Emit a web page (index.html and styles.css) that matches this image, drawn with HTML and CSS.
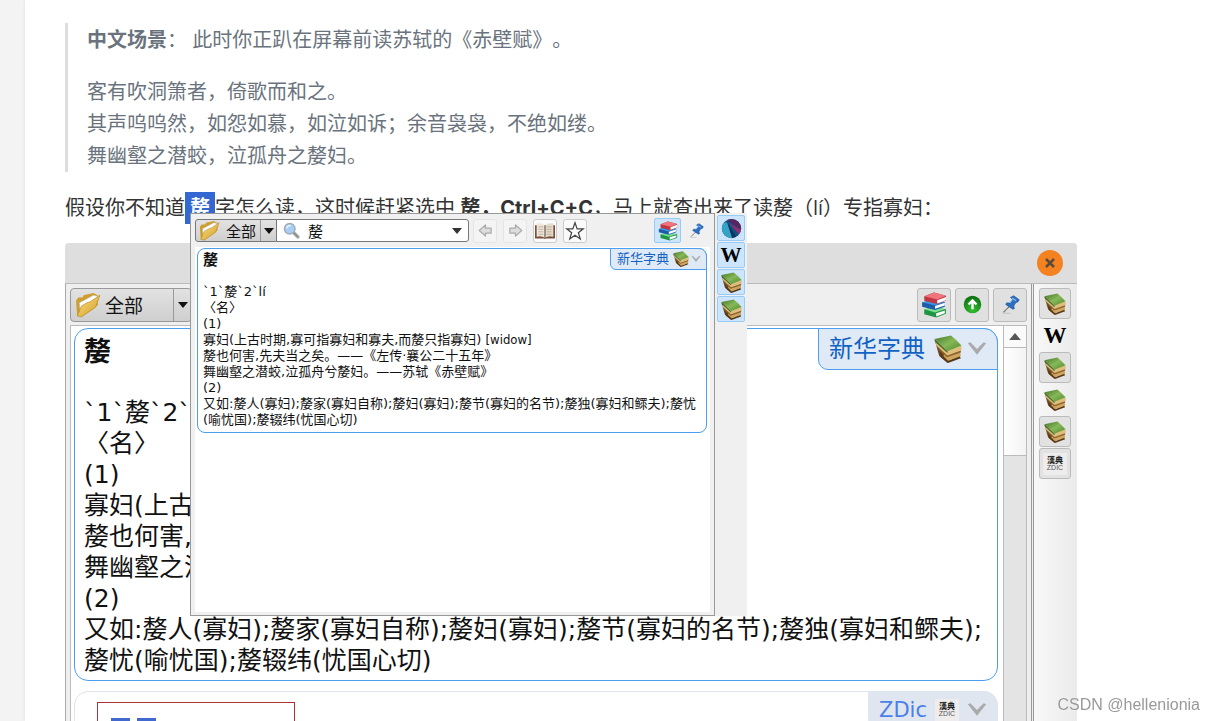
FILE: index.html
```
<!DOCTYPE html>
<html lang="zh-CN">
<head>
  <meta charset="utf-8">
  <title>嫠</title>
  <meta name="viewport" content="width=device-width, initial-scale=1.0">
  <link rel="stylesheet" href="styles.css">
</head>
<body>

  <svg class="sprite" aria-hidden="true">
    <defs>
      <linearGradient id="gold" x1="0" y1="0" x2="1" y2="1">
        <stop offset="0" stop-color="#fbe28a"/><stop offset="1" stop-color="#d39a1e"/>
      </linearGradient>
      <linearGradient id="leaf" x1="0" y1="0" x2="1" y2="1">
        <stop offset="0" stop-color="#44752a"/><stop offset=".5" stop-color="#86b857"/><stop offset="1" stop-color="#4f8a2c"/>
      </linearGradient>
      <radialGradient id="go" cx=".5" cy=".8" r=".8">
        <stop offset="0" stop-color="#35c22f"/><stop offset="1" stop-color="#0b6d10"/>
      </radialGradient>
      <clipPath id="ball"><circle cx="12" cy="12" r="11"/></clipPath>
    </defs>
    <symbol id="folder" viewBox="0 0 24 24">
      <path d="M1 8l2-3 4 0 1-2 9-2 4 2 0 9-14 10-5 0z" fill="#d09c2a"/>
      <path d="M4 10l13-7 4 1-3 10-13 6z" fill="#fff" stroke="#bbb" stroke-width=".6"/>
      <path d="M2 22L6 13 11 10 14 9 23 3 19 14 6 23z" fill="url(#gold)" stroke="#b5851d" stroke-width=".6"/>
    </symbol>
    <symbol id="search" viewBox="0 0 24 24">
      <path d="M14 14l7 7" stroke="#bbb" stroke-width="5" stroke-linecap="round"/>
      <path d="M14 14l7 7" stroke="#8d8d8d" stroke-width="2.5" stroke-linecap="round"/>
      <circle cx="9.500" cy="9.500" r="7.500" fill="#a9cdf4" stroke="#a2abb8" stroke-width="2"/>
      <path d="M5 9q1-4 6-4" stroke="#e8f4ff" stroke-width="2" fill="none"/>
    </symbol>
    <symbol id="books" viewBox="0 0 24 24">
      <path d="M3 16l9-2 11 2v4l-9 3.500-11-3z" fill="#1f9443"/>
      <path d="M14 19.500l8-2.500v2.500l-8 3z" fill="#fff"/>
      <path d="M3 16l10-2 9 2-9 3z" fill="#7be08f"/>
      <path d="M1 9.500l9-2 12 2v4l-9 3-12-3z" fill="#1b5dab"/>
      <path d="M13 13l9-3v2.500l-9 3z" fill="#fff"/>
      <path d="M1 9.500l9-2 12 2-9 3z" fill="#3f93dd"/>
      <path d="M3 4l9-3.500 11 3v4.500l-8 3-12-3z" fill="#c03742"/>
      <path d="M15 7.500l8-3v3l-8 3z" fill="#fff"/>
      <path d="M3 4l9-3.500 11 3-8 3.500z" fill="#f0747b"/>
    </symbol>
    <symbol id="tome" viewBox="0 0 24 24">
      <path d="M.5 4l4 14 7 6 3-6z" fill="#6d4c20"/>
      <path d="M4 14l8 8 10-4 1 2-11 4-6-5z" fill="#55391a"/>
      <path d="M9 16l13-4 1 6-11 4-4-4z" fill="#cfa45c"/>
      <path d="M3 8l8 9 12-4v2l-12 4-7-7z" fill="#8a6430"/>
      <path d="M.5 4l10 10 13-5v4l-12 4.500L2 9z" fill="#e0bd7a"/>
      <path d="M.5 3.500l14-3q4 3 9 8.500l-12 5z" fill="url(#leaf)"/>
      <path d="M.5 3.500l11 10.500v1.500L1 6z" fill="#44682a"/>
    </symbol>
    <symbol id="pin" viewBox="0 0 24 24">
      <path d="M3 22L11 14" stroke="#777" stroke-width="1.500"/>
      <path d="M2 23h10" stroke="#bbb"/>
      <path d="M12 3l4-2 7 5-2 3-2 0-3 5 1 3-2 1-9-6 1-2 5 0 3-4z" fill="#2a6fc2" stroke="#184f96" stroke-width=".8"/>
      <path d="M14 4l5 3M11 10l3-4" stroke="#8ec0f4" stroke-width="1.500"/>
    </symbol>
    <symbol id="arrow" viewBox="0 0 24 24">
      <path d="M2 12L12 3v5h9v8h-9v5z" fill="#ddd" stroke="#aaa" stroke-width="2" stroke-linejoin="round"/>
    </symbol>
    <symbol id="openbook" viewBox="0 0 24 24">
      <path d="M0 5h24v16H13l-1 1-1-1H0z" fill="#76513c"/>
      <path d="M2 3q6-1 10 2v15q-5-3-10-1z" fill="#efe7da"/>
      <path d="M22 3q-6-1-10 2v15q5-3 10-1z" fill="#e6dccb"/>
      <path d="M4 7h6M4 10h6M4 13h6M4 16h6M14 7h6M14 10h6M14 13h6M14 16h6" stroke="#b5a996"/>
      <path d="M12 5v15" stroke="#6f6255" stroke-width="1.500"/>
    </symbol>
    <symbol id="star" viewBox="0 0 24 24">
      <path d="M12 2l2.600 7.400H22l-6 4.700 2.300 7.400L12 17l-6.300 4.500L8 14.100 2 9.400h7.400z" fill="#fff" stroke="#444" stroke-width="1.500"/>
    </symbol>
    <symbol id="chevron" viewBox="0 0 24 24">
      <path d="M1 5l3-1 8 8 8-8 3 1-11 14z" fill="#aaa"/>
    </symbol>
    <symbol id="down" viewBox="0 0 10 6"><path d="M0 0h10L5 6z" fill="currentColor"/></symbol>
    <symbol id="up" viewBox="0 0 10 6"><path d="M0 6h10L5 0z" fill="currentColor"/></symbol>
    <symbol id="go-up" viewBox="0 0 24 24">
      <circle cx="12" cy="12" r="11" fill="url(#go)"/>
      <path d="M12 18V8M7 12l5-5 5 5" fill="none" stroke="#fff" stroke-width="3"/>
    </symbol>
    <symbol id="sphere" viewBox="0 0 24 24">
      <g clip-path="url(#ball)">
        <path d="M0 0h24v24H0z" fill="#124e84"/>
        <path d="M0 5l7 0 8 19H0z" fill="#35a3c4"/>
        <path d="M4 0h20v14z" fill="#59245f"/>
        <path d="M8 5l16 9v8z" fill="#902f6e"/>
        <path d="M7 5l12 19h-6z" fill="#0b3560"/>
      </g>
    </symbol>
  </svg>

  <main class="post">
    <blockquote>
      <p><strong>中文场景</strong>： 此时你正趴在屏幕前读苏轼的《赤壁赋》。</p>
      <p>客有吹洞箫者，倚歌而和之。<br>其声呜呜然，如怨如慕，如泣如诉；余音袅袅，不绝如缕。<br>舞幽壑之潜蛟，泣孤舟之嫠妇。</p>
    </blockquote>

    <p class="lead">假设你不知道<strong class="picked"> 嫠 </strong>字怎么读，这时候赶紧选中 <strong>嫠，<span class="keys">Ctrl+C+C</span></strong>，马上就查出来了读嫠（lí）专指寡妇：</p>

    <section class="reader">
      <header class="titlebar">
        <button class="close" aria-label="关闭"><svg viewBox="0 0 10 10"><path d="M1 1l8 8M9 1l-8 8" stroke="#5d4a3a" stroke-width="2.500"/></svg></button>
      </header>
      <div class="reader-body">
        <div class="reader-main">
          <div class="toolbar">
            <div class="group">
              <svg class="folder"><use href="#folder"/></svg>
              <select aria-label="词典组"><option>全部</option></select>
              <span class="drop"><svg><use href="#down"/></svg></span>
            </div>
            <div class="tools">
              <button aria-label="词典"><svg><use href="#books"/></svg></button>
              <button aria-label="上移"><svg class="small"><use href="#go-up"/></svg></button>
              <button aria-label="固定"><svg class="small"><use href="#pin"/></svg></button>
            </div>
          </div>
          <div class="view">
            <div class="entries">
              <article class="entry">
                <div class="tag">新华字典 <svg class="tome"><use href="#tome"/></svg><svg class="chev"><use href="#chevron"/></svg></div>
                <h2>嫠</h2>
                <p>`1`嫠`2`lí<br>〈名〉<br>(1)<br>寡妇(上古时期,寡可指寡妇和寡夫,而嫠只指寡妇) [widow]<br>嫠也何害,先夫当之矣。——《左传·襄公二十五年》<br>舞幽壑之潜蛟,泣孤舟兮嫠妇。——苏轼《赤壁赋》<br>(2)<br>又如:嫠人(寡妇);嫠家(寡妇自称);嫠妇(寡妇);嫠节(寡妇的名节);嫠独(寡妇和鳏夫);<br>嫠忧(喻忧国);嫠辍纬(忧国心切)</p>
              </article>
              <article class="entry next">
                <div class="tag">ZDic <span class="zdic"><b>漢典</b>ZDIC</span><svg class="chev"><use href="#chevron"/></svg></div>
                <div class="redbox"><i></i><i></i></div>
              </article>
            </div>
            <div class="scroll">
              <button aria-label="向上滚动"><svg><use href="#up"/></svg></button>
              <div class="thumb"></div>
            </div>
          </div>
        </div>
        <nav class="strip">
          <button class="on" aria-label="新华字典"><svg><use href="#tome"/></svg></button>
          <button class="wiki">W</button>
          <button class="on" aria-label="词典 3"><svg><use href="#tome"/></svg></button>
          <button aria-label="词典 4"><svg><use href="#tome"/></svg></button>
          <button class="on" aria-label="词典 5"><svg><use href="#tome"/></svg></button>
          <button class="on"><span class="zdic"><b>漢典</b>ZDIC</span></button>
        </nav>
      </div>
    </section>

    <section class="popup">
      <div class="popup-main">
        <div class="popup-bar">
          <div class="group">
            <svg class="folder"><use href="#folder"/></svg>
            <select aria-label="词典组"><option>全部</option></select>
            <span class="drop"><svg><use href="#down"/></svg></span>
          </div>
          <div class="query">
            <svg class="glass"><use href="#search"/></svg>
            <input type="text" value="嫠" aria-label="查询">
            <svg class="caret"><use href="#down"/></svg>
          </div>
          <div class="nav">
            <button class="off" aria-label="后退"><svg><use href="#arrow"/></svg></button>
            <button class="off flip" aria-label="前进"><svg><use href="#arrow"/></svg></button>
            <button aria-label="打开"><svg class="wide"><use href="#openbook"/></svg></button>
            <button aria-label="收藏"><svg class="wide"><use href="#star"/></svg></button>
          </div>
          <div class="right">
            <button class="lit" aria-label="词典"><svg><use href="#books"/></svg></button>
            <button aria-label="固定"><svg class="small"><use href="#pin"/></svg></button>
          </div>
        </div>
        <div class="popup-view">
          <article class="entry">
            <div class="tag">新华字典 <svg class="tome"><use href="#tome"/></svg><svg class="chev"><use href="#chevron"/></svg></div>
            <h2>嫠</h2>
            <p>`1`嫠`2`lí<br>〈名〉<br>(1)<br>寡妇(上古时期,寡可指寡妇和寡夫,而嫠只指寡妇) <span class="en">[widow]</span><br>嫠也何害,先夫当之矣。——《左传·襄公二十五年》<br>舞幽壑之潜蛟,泣孤舟兮嫠妇。——苏轼《赤壁赋》<br>(2)<br>又如:嫠人(寡妇);嫠家(寡妇自称);嫠妇(寡妇);嫠节(寡妇的名节);嫠独(寡妇和鳏夫);嫠忧<br>(喻忧国);嫠辍纬(忧国心切)</p>
          </article>
        </div>
      </div>
      <nav class="popup-strip">
        <button aria-label="网站"><svg><use href="#sphere"/></svg></button>
        <button class="wiki">W</button>
        <button aria-label="词典 3"><svg><use href="#tome"/></svg></button>
        <button aria-label="词典 4"><svg><use href="#tome"/></svg></button>
      </nav>
    </section>
  </main>

  <div class="watermark">CSDN @hellenionia</div>

</body>
</html>
```
FILE: styles.css
```
* {
  box-sizing: border-box;
}

html, body {
  margin: 0;
  height: 100%;
  overflow: hidden;
  background: #f3f3f3;
  font-family: "Open Sans", "Noto Sans CJK SC", sans-serif;
  text-spacing-trim: space-all;
}

p, h2, blockquote {
  margin: 0;
}

button, select, input {
  margin: 0;
  padding: 0;
  border: 0;
  background: none;
  font: inherit;
  color: inherit;
  appearance: none;
  outline: none;
}

button {
  display: flex;
  align-items: center;
  justify-content: center;
}

svg {
  display: block;
  flex: none;
}

.sprite {
  position: absolute;
  width: 0;
  height: 0;
}

.post {
  position: relative;
  height: 100vh;
  margin-left: 25px;
  padding: 23px 138px 0 40px;
  overflow: hidden;
  background: #fff;
  box-shadow: 0 0 4px rgba(0, 0, 0, 0.08);
  font-size: 20px;
  line-height: 32px;
  color: #333;
}

blockquote {
  padding: 1px 0 0 19px;
  border-left: 3px solid #ddd;
  color: #6a737d;
}

blockquote p + p {
  margin-top: 20px;
}

.lead {
  margin: 20px 0 19px;
  white-space: nowrap;
}

.picked {
  display: inline-block;
  padding: 0 5px;
  background: #3367d1;
  color: #fff;
}

.keys {
  font-family: Inter, sans-serif;
}

/* Entry cards, shared by the window and the popup */
.entry {
  position: relative;
  border: 1px solid #4a9fee;
  background: #fff;
  color: #111;
  font-family: "DejaVu Sans", "Noto Sans CJK SC", sans-serif;
  white-space: nowrap;
}

.tag {
  position: absolute;
  top: -1px;
  right: -1px;
  display: flex;
  align-items: center;
  border: 1px solid #4a9fee;
  background: #dfeaf6;
  color: #1262c4;
}

.group {
  display: flex;
  align-items: center;
  border: 1px solid #999;
  background: linear-gradient(#e2e2e2, #cfcfcf);
  color: #111;
}

.drop {
  display: flex;
  align-self: stretch;
  align-items: center;
  justify-content: center;
  border-left: 1px solid #999;
}

.wiki {
  font-family: "Liberation Serif", serif;
  font-weight: bold;
  color: #000;
}

/* Dictionary window */
.reader {
  border-radius: 4px 4px 0 0;
  background: #f2f2f2;
}

.titlebar {
  display: flex;
  justify-content: flex-end;
  align-items: center;
  height: 41px;
  padding-right: 14px;
  border-radius: 4px 4px 0 0;
  border-bottom: 1px solid #bbb;
  background: #dedede;
}

.close {
  width: 26px;
  height: 26px;
  border-radius: 50%;
  background: #f58220;
}

.close svg {
  width: 10px;
  height: 10px;
}

.reader-body {
  display: flex;
}

.reader-main {
  flex: 1;
  min-width: 0;
  padding: 0 4px;
  border-left: 1px solid #aaa;
  border-right: 3px double #999;
  background: #efefef;
}

.toolbar {
  display: flex;
  justify-content: space-between;
  align-items: center;
  height: 41px;
}

.toolbar .group {
  height: 34px;
  padding-left: 4px;
  border-radius: 4px;
}

.toolbar .folder {
  width: 26px;
  height: 26px;
}

.toolbar select {
  width: 72px;
  height: 30px;
  padding-left: 4px;
  font-size: 19px;
}

.toolbar .drop {
  width: 18px;
}

.drop svg {
  width: 10px;
  height: 6px;
}

.tools {
  display: flex;
  gap: 4px;
}

.tools button {
  width: 34px;
  height: 34px;
  border: 1px solid #bbb;
  border-radius: 3px;
  background: #e0e0e0;
}

.tools svg {
  width: 26px;
  height: 26px;
}

.tools .small {
  width: 19px;
  height: 19px;
}

.view {
  display: flex;
  border: 1px solid #bbb;
  border-bottom: 0;
  background: #fff;
}

.entries {
  flex: 1;
  min-width: 0;
  padding: 2px 5px 0 3px;
}

.reader .entry {
  padding: 7px 9px 4px;
  border-radius: 14px;
  font-size: 25px;
  line-height: 31px;
}

.reader h2 {
  margin-bottom: 30px;
  font-size: 27px;
  line-height: 31px;
}

.reader .tag {
  height: 42px;
  padding: 0 10px;
  border-radius: 0 14px 0 10px;
  font-size: 24px;
}

.reader .tome {
  width: 28px;
  height: 28px;
  margin: 0 5px 0 9px;
}

.reader .chev {
  width: 20px;
  height: 20px;
}

.reader .next {
  height: 60px;
  margin-top: 10px;
  padding: 10px 22px;
  border-color: #dfe4ea;
}

.reader .next .tag {
  height: 38px;
  gap: 8px;
  border-color: #dfe6f0;
  background: #dfe6f0;
  color: #4a7fea;
  font-size: 21px;
}

.zdic {
  display: block;
  width: 24px;
  padding: 3px 0;
  background: #eeecec;
  color: #555;
  font: 7px "Liberation Sans", sans-serif;
  line-height: 8px;
  text-align: center;
}

.zdic b {
  display: block;
  color: #222;
  font-family: "Noto Sans CJK TC", sans-serif;
  font-size: 8px;
}

.redbox {
  display: flex;
  gap: 7px;
  width: 198px;
  height: 50px;
  padding: 15px 13px;
  border: 1px solid #a83236;
}

.redbox i {
  width: 19px;
  height: 3px;
  background: #4169cf;
}

.scroll {
  width: 23px;
  border-left: 1px solid #bbb;
  background: #e4e4e4;
}

.scroll button {
  width: 100%;
  height: 22px;
  border-bottom: 1px solid #bbb;
  background: #fafafa;
  color: #555;
}

.scroll svg {
  width: 12px;
  height: 7px;
}

.thumb {
  height: 108px;
  border-bottom: 1px solid #bbb;
  background: linear-gradient(90deg, #fff, #f3f3f3);
}

.strip {
  display: flex;
  flex-direction: column;
  gap: 1px;
  width: 43px;
  padding: 4px 5px;
  background: linear-gradient(90deg, #f8f8f8, #ebebeb);
}

.strip button {
  width: 32px;
  height: 31px;
  border-radius: 3px;
}

.strip .on {
  border: 1px solid #bbb;
  background: #e2e2e2;
}

.strip svg {
  width: 22px;
  height: 22px;
}

.strip .wiki {
  font-size: 23px;
}

/* Scan popup */
.popup {
  position: absolute;
  top: 213px;
  left: 165px;
  display: flex;
  width: 557px;
  height: 403px;
}

.popup-main {
  display: flex;
  flex: 1;
  flex-direction: column;
  min-width: 0;
  padding: 0 4px 3px;
  border: 1px solid #999;
  background: #f0f0f0;
}

.popup-bar {
  display: flex;
  align-items: center;
  height: 33px;
}

.popup-bar .group {
  height: 23px;
  padding-left: 3px;
  border-color: #777;
  border-radius: 3px 0 0 3px;
}

.popup-bar .folder {
  width: 21px;
  height: 21px;
}

.popup-bar select {
  width: 40px;
  padding-left: 6px;
  font-size: 15px;
  line-height: 20px;
}

.popup-bar .drop {
  width: 16px;
}

.query {
  display: flex;
  align-items: center;
  width: 193px;
  height: 23px;
  margin-left: -1px;
  padding: 0 6px;
  border: 1px solid #777;
  border-radius: 0 3px 3px 0;
  background: #fff;
}

.glass {
  width: 17px;
  height: 17px;
}

.query input {
  flex: 1;
  min-width: 0;
  height: 20px;
  padding-left: 8px;
  color: #111;
  font-size: 15px;
}

.caret {
  width: 10px;
  height: 6px;
}

.nav {
  display: flex;
  gap: 6px;
  margin-left: 4px;
}

.nav button {
  width: 24px;
  height: 24px;
  border: 1px solid #ccc;
  border-radius: 3px;
  background: #fafafa;
}

.nav .off {
  border-color: #e4e4e4;
  background: #f4f4f4;
}

.nav svg {
  width: 15px;
  height: 15px;
}

.nav .wide {
  width: 20px;
  height: 20px;
}

.flip svg {
  transform: scaleX(-1);
}

.right {
  display: flex;
  gap: 2px;
  margin-left: auto;
}

.right button {
  width: 27px;
  height: 25px;
}

.right .lit,
.popup-strip button {
  border: 1px solid #99ccf5;
  border-radius: 2px;
  background: #cce5fc;
}

.right svg {
  width: 20px;
  height: 20px;
}

.right .small {
  width: 15px;
  height: 15px;
}

.popup-view {
  flex: 1;
  padding: 1px 3px 1px 2px;
  background: #fff;
}

.popup .entry {
  padding: 3px 5px 4px;
  border-radius: 8px;
  font-size: 13px;
  line-height: 16px;
}

.popup h2 {
  margin-bottom: 16px;
  font-size: 15px;
  line-height: 16px;
}

.popup .tag {
  height: 22px;
  padding: 0 5px 0 6px;
  border-radius: 0 8px 0 6px;
}

.popup .tome {
  width: 16px;
  height: 16px;
  margin: 0 2px 0 4px;
}

.popup .chev {
  width: 10px;
  height: 10px;
}

.en {
  font-family: "DejaVu Sans Condensed", "DejaVu Sans", sans-serif;
}

.popup-strip {
  display: flex;
  flex-direction: column;
  gap: 1px;
  width: 32px;
  padding: 2px;
  background: #f0f0f0;
}

.popup-strip button {
  width: 28px;
  height: 26px;
}

.popup-strip svg {
  width: 21px;
  height: 21px;
}

.popup-strip .wiki {
  font-size: 21px;
}

.watermark {
  position: fixed;
  right: 15px;
  bottom: 6px;
  color: #999;
  font-family: "Liberation Sans", sans-serif;
  font-size: 16px;
  line-height: 20px;
  text-shadow: 0 0 1px #fff;
}
```
